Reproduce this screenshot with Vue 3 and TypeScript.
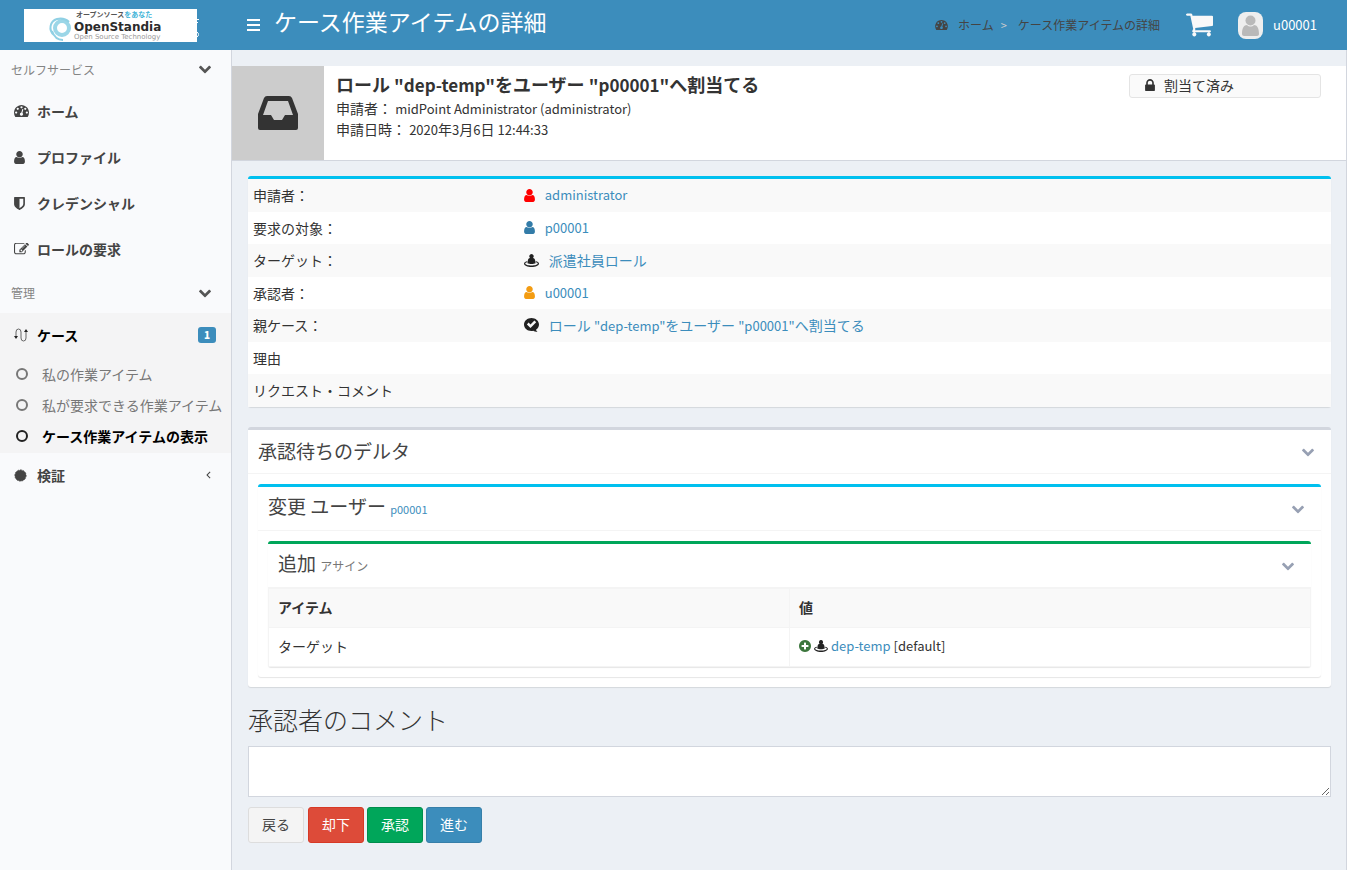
<script setup lang="ts">
import { ref } from 'vue'

interface Icon {
  box: string
  d: string
}

const fa = '0 0 1792 1792'
const icons: Record<string, Icon> = {
  user: { box: '256 128 1280 1536', d: 'M1536 1399q0 109-62.5 187t-150.5 78h-854q-88 0-150.5-78t-62.5-187q0-85 8.5-160.5t31.5-152 58.5-131 94-89 134.5-34.5q131 128 313 128t313-128q76 0 134.5 34.5t94 89 58.5 131 31.5 152 8.5 160.5zm-256-887q0 159-112.5 271.5t-271.5 112.5-271.5-112.5-112.5-271.5 112.5-271.5 271.5-112.5 271.5 112.5 112.5 271.5z' },
  lock: { box: '320 128 1152 1408', d: 'M640 768h512v-192q0-106-75-181t-181-75-181 75-75 181v192zm832 96v576q0 40-28 68t-68 28h-960q-40 0-68-28t-28-68v-576q0-40 28-68t68-28h32v-192q0-184 132-316t316-132 316 132 132 316v192h32q40 0 68 28t28 68z' },
  cart: { box: '64 256 1664 1408', d: 'M704 1536q0 52-38 90t-90 38-90-38-38-90 38-90 90-38 90 38 38 90zm896 0q0 52-38 90t-90 38-90-38-38-90 38-90 90-38 90 38 38 90zm128-1088v512q0 24-16.5 42.5t-40.5 21.5l-1044 122q13 60 13 70 0 16-24 64h920q26 0 45 19t19 45-19 45-45 19h-1024q-26 0-45-19t-19-45q0-11 8-31.5t16-36 21.5-40 15.5-29.5l-177-823h-204q-26 0-45-19t-19-45 19-45 45-19h256q16 0 28.5 6.5t19.5 15.5 13 24.5 8 26 5.5 29.5 4.5 26h1201q26 0 45 19t19 45z' },
  down: { box: '90 500 1612 1100', d: 'M1683 808l-742 741q-19 19-45 19t-45-19l-742-741q-19-19-19-45.5t19-45.5l166-165q19-19 45-19t45 19l531 531 531-531q19-19 45-19t45 19l166 165q19 19 19 45.5t-19 45.5z' },
  gauge: { box: '0 256 1792 1408', d: 'M384 1152q0-53-37.5-90.5t-90.5-37.5-90.5 37.5-37.5 90.5 37.5 90.5 90.5 37.5 90.5-37.5 37.5-90.5zm192-448q0-53-37.5-90.5t-90.5-37.5-90.5 37.5-37.5 90.5 37.5 90.5 90.5 37.5 90.5-37.5 37.5-90.5zm428 481l101-382q6-26-7.5-48.5t-38.5-29.5-48 6.5-30 39.5l-101 382q-60 5-107 43.5t-63 98.5q-20 77 20 146t117 89 146-20 89-117q16-60-6-117t-72-91zm660-33q0-53-37.5-90.5t-90.5-37.5-90.5 37.5-37.5 90.5 37.5 90.5 90.5 37.5 90.5-37.5 37.5-90.5zm-640-640q0-53-37.5-90.5t-90.5-37.5-90.5 37.5-37.5 90.5 37.5 90.5 90.5 37.5 90.5-37.5 37.5-90.5zm448 192q0-53-37.5-90.5t-90.5-37.5-90.5 37.5-37.5 90.5 37.5 90.5 90.5 37.5 90.5-37.5 37.5-90.5zm320 448q0 261-141 483-19 29-54 29h-1402q-35 0-54-29-141-221-141-483 0-182 71-348t191-286 286-191 348-71 348 71 286 191 191 286 71 348z' },
  shield: { box: '256 128 1280 1536', d: 'M1344 960v-640h-448v1137q119-63 213-137 235-184 235-360zm192-768v768q0 86-33.5 170.5t-83 150-118 127.5-126.5 103-121 77.5-89.5 49.5-42.5 20q-12 6-26 6t-26-6q-16-7-42.5-20t-89.5-49.5-121-77.5-126.5-103-118-127.5-83-150-33.5-170.5v-768q0-26 19-45t45-19h1152q26 0 45 19t19 45z' },
  edit: { box: '0 192 1792 1408', d: 'M888 1184l116-116-152-152-116 116v56h96v96h56zm440-720q-16-16-33 1l-350 350q-17 17-1 33t33-1l350-350q17-17 1-33zm80 594v190q0 119-84.5 203.5t-203.5 84.5h-832q-119 0-203.5-84.5t-84.5-203.5v-832q0-119 84.5-203.5t203.5-84.5h832q63 0 117 25 15 7 18 23 3 17-9 29l-49 49q-14 14-32 8-23-6-45-6h-832q-66 0-113 47t-47 113v832q0 66 47 113t113 47h832q66 0 113-47t47-113v-126q0-13 9-22l64-64q15-15 35-7t20 29zm-96-738l288 288-672 672h-288v-288zm444 132l-92 92-288-288 92-92q28-28 68-28t68 28l152 152q28 28 28 68t-28 68z' },
  plus: { box: '128 128 1536 1536', d: 'M1344 960v-128q0-26-19-45t-45-19h-256v-256q0-26-19-45t-45-19h-128q-26 0-45 19t-19 45v256h-256q-26 0-45 19t-19 45v128q0 26 19 45t45 19h256v256q0 26 19 45t45 19h128q26 0 45-19t19-45v-256h256q26 0 45-19t19-45zm320-64q0 209-103 385.5t-279.5 279.5-385.5 103-385.5-103-279.5-279.5-103-385.5 103-385.5 279.5-279.5 385.5-103 385.5 103 279.5 279.5 103 385.5z' },
  left: { box: fa, d: 'M1270 480L860 896l410 416-110 110-520-526 520-526z' },
  role: { box: '0 0 15 13', d: 'M7.500 0a2.300 2.300 0 0 1 1.500 4c1.300.3 1.900 1 2.100 2.300l.5 3c-2 1-6.200 1-8.200 0l.5-3C4.100 5 4.700 4.300 6 4A2.300 2.300 0 0 1 7.500 0zM3.300 7.200C1.300 7.600 0 8.400 0 9.500 0 11.500 3.400 13 7.500 13S15 11.500 15 9.500c0-1.100-1.300-1.900-3.300-2.300l.2 1c1.200.3 1.900.8 1.900 1.300 0 1-2.800 2-6.300 2s-6.300-1-6.300-2c0-.5.7-1 1.900-1.300z' },
  check: { box: '0 0 15 14', d: 'M7.500 0C11.600 0 15 2.900 15 6.500c0 2.300-1.200 4-3 5.300.3.900.8 1.500 1.500 2.200-2 0-3.300-.5-4.200-1.200C4.200 13.800 0 10.700 0 6.500 0 2.900 3.400 0 7.500 0zM2.900 6.400l3.600 3.700 5.700-5.900-1.800-1.700-3.900 4-1.900-1.900z' },
}

const open = ref(true)
const comment = ref('')

const selfService = [
  { icon: 'gauge', label: 'ホーム' },
  { icon: 'user', label: 'プロファイル' },
  { icon: 'shield', label: 'クレデンシャル' },
  { icon: 'edit', label: 'ロールの要求' },
]
const caseItems = [
  { label: '私の作業アイテム', active: false },
  { label: '私が要求できる作業アイテム', active: false },
  { label: 'ケース作業アイテムの表示', active: true },
]
const details = [
  { label: '申請者：', icon: 'user', tone: 'red', text: 'administrator', latin: true },
  { label: '要求の対象：', icon: 'user', tone: 'blue', text: 'p00001', latin: true },
  { label: 'ターゲット：', icon: 'role', tone: 'dark', text: '派遣社員ロール', latin: false },
  { label: '承認者：', icon: 'user', tone: 'orange', text: 'u00001', latin: true },
  { label: '親ケース：', icon: 'check', tone: 'dark', text: '', latin: false },
  { label: '理由', icon: '', tone: '', text: '', latin: false },
  { label: 'リクエスト・コメント', icon: '', tone: '', text: '', latin: false },
]
</script>

<template>
  <div class="app">
    <header class="top">
      <a href="#" class="logo" aria-label="OpenStandia">
        <svg width="176" height="33" viewBox="0 0 176 33">
          <rect width="173" height="33" fill="#fff" />
          <path d="M173 10.500h2M173 13.500h1M173 23c2 1 2 4 0 5" stroke="#fff" fill="none" />
          <circle cx="38" cy="19" r="7" fill="none" stroke="#9bd6e7" stroke-width="4" />
          <path d="M30 26c-6-5-4-14 3-16 5-1 9 0 12 3M28 22c2 6 6 9 11 9" fill="none" stroke="#8fd0e4" stroke-width="2" />
          <text x="52" y="8" class="l-tag">オープンソース<tspan fill="#45b5d8">をあなた</tspan></text>
          <text x="50" y="22" class="l-name">OpenStandia</text>
          <text x="50" y="30" class="l-sub">Open Source Technology</text>
        </svg>
      </a>
      <button class="burger" aria-label="メニュー">
        <svg width="13" height="12" viewBox="0 0 13 12"><path d="M0 1h13M0 6h13M0 11h13" stroke="#fff" stroke-width="2" /></svg>
      </button>
      <h1>ケース作業アイテムの詳細</h1>
      <nav class="crumbs">
        <svg class="crumb-icon" :viewBox="icons.gauge.box"><path :d="icons.gauge.d" /></svg>
        <a href="#">ホーム</a><span class="sep">&gt;</span><a href="#">ケース作業アイテムの詳細</a>
      </nav>
      <a href="#" class="cart" aria-label="カート"><svg :viewBox="icons.cart.box"><path :d="icons.cart.d" /></svg></a>
      <a href="#" class="account">
        <svg width="25" height="27" viewBox="0 0 25 27">
          <rect width="25" height="27" rx="8" fill="#eee" />
          <circle cx="12.500" cy="8.500" r="5" fill="#b9b9b9" />
          <path d="M4 22c0-6 2-9 5-9 2 2 5 2 7 0 3 0 5 3 5 9 0 1-1 2-2 2H6c-1 0-2-1-2-2z" fill="#b9b9b9" />
        </svg>
        <span>u00001</span>
      </a>
    </header>

    <div class="body">
      <aside class="side">
        <button class="group">セルフサービス<svg :viewBox="icons.down.box"><path :d="icons.down.d" /></svg></button>
        <a v-for="item in selfService" :key="item.label" href="#" class="item">
          <svg :class="item.icon" :viewBox="icons[item.icon].box"><path :d="icons[item.icon].d" /></svg>
          <span>{{ item.label }}</span>
        </a>
        <button class="group second">管理<svg :viewBox="icons.down.box"><path :d="icons.down.d" /></svg></button>
        <div class="tree">
          <a href="#" class="item current">
            <svg class="flow" viewBox="0 0 15 14">
              <path d="M2 9V4q0-3 2.500-3T7 4v6q0 3 2.500 3T12 10V3" fill="none" stroke="#666" />
              <path d="M0 8h4L2 11zM10 4l2-3 2 3z" fill="#222" />
            </svg>
            <span>ケース</span><b class="badge">1</b>
          </a>
          <a v-for="item in caseItems" :key="item.label" href="#" class="sub" :class="{ active: item.active }"><i></i>{{ item.label }}</a>
        </div>
        <a href="#" class="item">
          <svg class="burst" viewBox="0 0 14 14"><circle cx="7" cy="7" r="6" /><circle cx="7" cy="7" r="6" fill="none" stroke="currentColor" stroke-dasharray="2 1" /></svg>
          <span>検証</span>
          <svg class="left" :viewBox="icons.left.box"><path :d="icons.left.d" /></svg>
        </a>
      </aside>

      <main>
        <section class="summary">
          <div class="summary-icon">
            <svg width="40" height="34" viewBox="0 0 40 34">
              <path fill-rule="evenodd" d="M9 0h22q2 0 3 2l6 16v14q0 2-2 2H2q-2 0-2-2V18L6 2q1-2 3-2zM10 5L5 19h8l3 5h8l3-5h8L30 5z" />
            </svg>
          </div>
          <div class="summary-text">
            <h2>ロール <span>"dep-temp"</span>をユーザー <span>"p00001"</span>へ割当てる</h2>
            <p>申請者： <span>midPoint Administrator (administrator)</span></p>
            <p>申請日時： <span>2020</span>年<span>3</span>月<span>6</span>日 <span>12:44:33</span></p>
          </div>
          <div class="tag"><svg :viewBox="icons.lock.box"><path :d="icons.lock.d" /></svg>割当て済み</div>
        </section>

        <div class="content">
          <table class="details">
            <tbody>
              <tr v-for="row in details" :key="row.label">
                <th scope="row">{{ row.label }}</th>
                <td>
                  <div v-if="row.icon" class="ref">
                    <svg :class="[row.icon, row.tone]" :viewBox="icons[row.icon].box"><path :d="icons[row.icon].d" /></svg>
                    <a v-if="row.text" href="#" :class="{ latin: row.latin }">{{ row.text }}</a>
                    <a v-else href="#">ロール <span class="latin">"dep-temp"</span>をユーザー <span class="latin">"p00001"</span>へ割当てる</a>
                  </div>
                </td>
              </tr>
            </tbody>
          </table>

          <section class="box">
            <div class="box-head">
              <h3>承認待ちのデルタ</h3>
              <button aria-label="折りたたむ" @click="open = !open"><svg :viewBox="icons.down.box"><path :d="icons.down.d" /></svg></button>
            </div>
            <div v-if="open" class="box-body">
              <section class="box info">
                <div class="box-head">
                  <h3>変更 ユーザー <a href="#">p00001</a></h3>
                  <button aria-label="折りたたむ"><svg :viewBox="icons.down.box"><path :d="icons.down.d" /></svg></button>
                </div>
                <div class="box-body">
                  <section class="box success">
                    <div class="box-head">
                      <h3>追加 <small>アサイン</small></h3>
                      <button aria-label="折りたたむ"><svg :viewBox="icons.down.box"><path :d="icons.down.d" /></svg></button>
                    </div>
                    <table class="delta">
                      <thead><tr><th scope="col">アイテム</th><th scope="col">値</th></tr></thead>
                      <tbody>
                        <tr>
                          <td>ターゲット</td>
                          <td>
                            <div class="value">
                              <svg class="plus" :viewBox="icons.plus.box"><path :d="icons.plus.d" /></svg>
                              <svg class="role" :viewBox="icons.role.box"><path :d="icons.role.d" /></svg>
                              <a href="#">dep-temp</a><span>[default]</span>
                            </div>
                          </td>
                        </tr>
                      </tbody>
                    </table>
                  </section>
                </div>
              </section>
            </div>
          </section>

          <label class="comment-title" for="comment">承認者のコメント</label>
          <textarea id="comment" v-model="comment"></textarea>
          <div class="actions">
            <button class="btn back">戻る</button>
            <button class="btn reject">却下</button>
            <button class="btn approve">承認</button>
            <button class="btn forward">進む</button>
          </div>
        </div>
      </main>
    </div>
  </div>
</template>

<style>
body { margin: 0; background: #ecf0f5; }
</style>

<style scoped>
* { box-sizing: border-box; }
.app {
  min-height: 100vh;
  display: flex;
  flex-direction: column;
  font: 14px/20px "Noto Sans CJK JP", sans-serif;
  color: #333;
}
h1, h2, h3, p { margin: 0; font-weight: 400; }
a { color: #3c8dbc; text-decoration: none; }
button { font: inherit; cursor: pointer; }
svg { fill: currentColor; flex: none; display: block; }

.top { height: 50px; background: #3c8dbc; display: flex; align-items: center; color: #fff; padding-right: 30px; }
.logo { width: 247px; padding-left: 24px; }
.l-tag { font: 700 7px "Noto Sans CJK JP", sans-serif; fill: #555; }
.l-name { font: 700 12px "DejaVu Sans", sans-serif; fill: #2b2b2b; }
.l-sub { font: 7px "DejaVu Sans", sans-serif; fill: #999; }
.burger { border: 0; background: none; padding: 0; }
.burger svg { shape-rendering: crispEdges; }
h1 { font-size: 23px; line-height: 30px; margin: 0 auto 8px 14px; }
.crumbs { display: flex; align-items: center; font-size: 12px; }
.crumbs a, .crumb-icon { color: #444; }
.crumb-icon { width: 13px; height: 10px; margin-right: 10px; }
.sep { margin: 0 11px 0 7px; font-size: 11px; color: #ccc; }
.cart { color: #f9f9f9; margin-left: 26px; }
.cart svg { width: 27px; height: 24px; }
.account { display: flex; align-items: center; gap: 10px; margin-left: 25px; color: #fff; font-size: 13px; }

.body { flex: 1; display: flex; }
.side { width: 232px; flex: none; background: #f9fafc; border-right: 1px solid #d2d6de; overflow: hidden; }
.group { width: 100%; height: 39px; border: 0; background: none; padding: 0 20px 0 11px; display: flex; align-items: center; justify-content: space-between; font-size: 12px; color: #848484; }
.group.second { height: 40px; }
.group svg { width: 12px; height: 9px; color: #555; }
.item { height: 46px; padding: 0 15px 2px 14px; display: flex; align-items: center; font-weight: 700; color: #444; }
.item > span { flex: 1; margin-left: 8px; }
.item .gauge, .item .edit { width: 15px; height: 12px; }
.item .user, .item .shield { width: 11px; height: 13px; }
.item .user + span, .item .shield + span { margin-left: 12px; }
.item .flow { width: 15px; height: 14px; }
.item .burst { width: 13px; height: 13px; }
.item .burst + span { margin-left: 10px; }
.item .left { width: 12px; height: 12px; margin-right: 2px; }
.tree { background: #f4f4f5; padding-bottom: 1px; }
.item.current { color: #000; }
.badge { width: 18px; height: 16px; border-radius: 3px; background: #3c8dbc; color: #fff; font-size: 10px; line-height: 15px; text-align: center; }
.sub { height: 31px; padding: 0 0 1px 16px; display: flex; align-items: center; color: #777; white-space: nowrap; }
.sub i { width: 12px; height: 12px; border: 2px solid #777; border-radius: 50%; margin-right: 14px; }
.sub.active { color: #000; font-weight: 700; }
.sub.active i { border-color: #222; }

main { flex: 1; min-width: 0; padding-top: 16px; border-right: 1px solid #d2d6de; }
.summary { min-height: 95px; display: flex; background: #fff; border-bottom: 1px solid #d2d6de; }
.summary-icon { width: 92px; background: #ccc; display: grid; place-items: center; }
.summary-text { flex: 1; padding: 5px 0 0 12px; }
.summary h2 { font-size: 18px; line-height: 26px; font-weight: 700; }
.summary h2 span { font-size: 17px; }
.summary p { line-height: 21px; }
.summary p span { font-size: 13px; }
.tag { width: 192px; height: 24px; margin: 8px 25px 0 0; padding: 0 0 2px 15px; display: flex; align-items: center; gap: 9px; background: #fafafa; border: 1px solid #e4e4e4; border-radius: 3px; }
.tag svg { width: 10px; height: 12px; }

.content { padding: 15px 15px 28px 16px; }
table { width: 100%; border-collapse: collapse; table-layout: fixed; }
.details { border-collapse: separate; border-spacing: 0; border-top: 3px solid #00c0ef; border-radius: 3px; background: #fff; box-shadow: 0 1px 1px #0000001a; }
.details tr { height: 32px; }
.details tr:nth-child(odd) { height: 33px; background: #f9f9f9; }
.details th { width: 25%; text-align: left; font-weight: 400; }
.details th, .details td { padding: 0 5px 1px; }
.ref { display: flex; align-items: center; }
.ref svg { margin-right: 10px; }
.ref .user { width: 11px; height: 13px; }
.ref .role { width: 15px; height: 13px; }
.ref .check { width: 15px; height: 14px; }
.latin { font-size: 13px; }
.red { color: #f00; }
.blue { color: #337ca8; }
.orange { color: #f39c12; }
.dark { color: #222; }

.box { background: #fff; border-top: 3px solid #d2d6de; border-radius: 3px; box-shadow: 0 1px 1px #0000001a; }
.content > .box { margin-top: 20px; }
.info { border-top-color: #00c0ef; }
.success { border-top-color: #00a65a; }
.box-head { height: 44px; padding: 0 17px 2px 10px; display: flex; align-items: center; justify-content: space-between; border-bottom: 1px solid #f4f4f4; color: #444; }
.box-head h3 { font-size: 19px; line-height: 24px; }
.box-head h3 a { font-size: 11px; }
.box-head small { font-size: 12px; color: #777; }
.box-head button { border: 0; background: none; padding: 4px 0 0; color: #97a0b3; }
.box-head button svg { width: 12px; height: 9px; }
.box-body { padding: 10px; }
.delta th, .delta td { height: 39px; padding: 0 9px 2px; text-align: left; border: 1px solid #f4f4f4; }
.delta thead { background: #f9f9f9; }
.value { display: flex; align-items: center; gap: 3px; font-size: 13px; }
.value .plus { width: 12px; height: 12px; color: #3c763d; }
.value .role { width: 14px; height: 12px; color: #222; }

.comment-title { display: block; margin-top: 17px; font-size: 25px; line-height: 30px; font-weight: 300; }
textarea { display: block; width: 100%; height: 51px; margin-top: 12px; border: 1px solid #d2d6de; background: #fff; font: inherit; resize: vertical; }
.actions { display: flex; gap: 3px; margin-top: 10px; }
.btn { width: 56px; height: 36px; padding: 0 0 2px; border: 1px solid; border-radius: 3px; color: #fff; }
.back { background: #f4f4f4; border-color: #ddd; color: #444; margin-right: 1px; }
.reject { background: #dd4b39; border-color: #d73925; }
.approve { background: #00a65a; border-color: #008d4c; }
.forward { background: #3c8dbc; border-color: #367fa9; }
</style>
